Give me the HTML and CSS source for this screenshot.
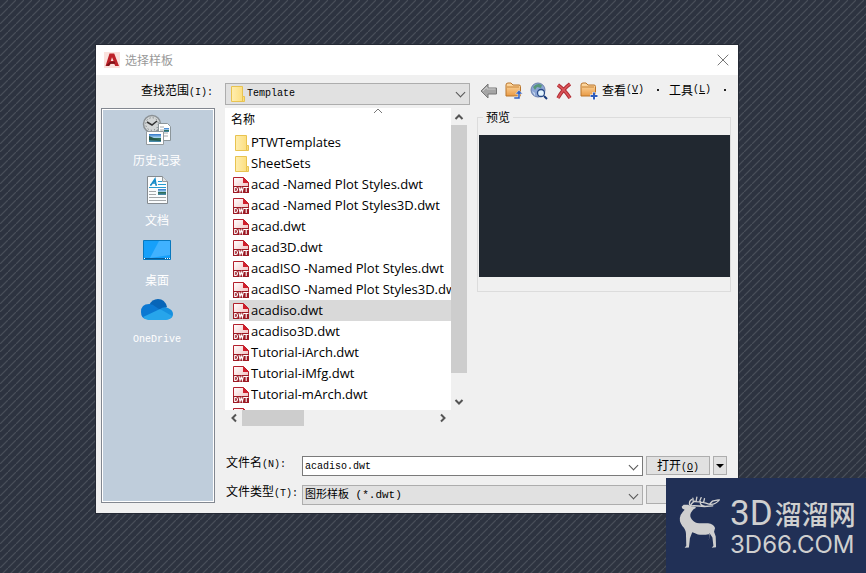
FILE: index.html
```html
<!DOCTYPE html>
<html lang="zh-CN">
<head>
<meta charset="utf-8">
<meta name="viewport" content="width=device-width, initial-scale=1">
<title>选择样板</title>
<link rel="stylesheet" href="styles.css">
</head>
<body>
<svg class="defs" aria-hidden="true">
  <defs>
    <linearGradient id="gRed" x1="0" y1="0" x2="1" y2="1"><stop offset="0" stop-color="#fff"/><stop offset="1" stop-color="#eeb4b4"/></linearGradient>
    <linearGradient id="gFolder" x1="0" y1="0" x2="1" y2="0"><stop offset="0" stop-color="#ffeeb0"/><stop offset="1" stop-color="#fbdc78"/></linearGradient>
    <linearGradient id="gOrange" x1="0" y1="0" x2="0" y2="1"><stop offset="0" stop-color="#ffe0ad"/><stop offset="1" stop-color="#e99a45"/></linearGradient>
    <linearGradient id="gPhoto" x1="0" y1="0" x2="0" y2="1"><stop offset="0" stop-color="#2f74c9"/><stop offset=".5" stop-color="#b5dff2"/><stop offset=".55" stop-color="#2d6b50"/><stop offset="1" stop-color="#4b8fb8"/></linearGradient>
  </defs>
  <symbol id="folder" viewBox="0 0 14 16"><path d="M.5.5h11v10h2v5H.5z" fill="url(#gFolder)" stroke="#e8c350"/><path d="M11.500 10.500v5" stroke="#e8c350"/></symbol>
  <symbol id="dwt" viewBox="0 0 16 16">
    <path d="M.5 15.500V.5h10l5 5v10z" fill="url(#gRed)" stroke="#b3202c"/>
    <path d="M10 0l6 6h-6z" fill="#d01f2c"/><path d="M0 9h16v7H0z" fill="#9c1a24"/>
    <path d="M1.700 10.500v4h1q1.800 0 1.800-2t-1.800-2zM6 10l1 4.500 1.200-3.500 1.200 3.500 1-4.500M11 10.500h4.500M13.200 10.500v4.500" fill="none" stroke="#fff" stroke-width="1.100"/>
  </symbol>
  <symbol id="orange-folder" viewBox="0 0 18 18"><path d="M1 14V3q0-2 2-2h3l2 2h6q1.500 0 1.500 1.500V14z" fill="url(#gOrange)" stroke="#b9742b"/><path d="M2 5h12" stroke="#c88438"/></symbol>
</svg>

<main class="dialog">
  <header class="titlebar">
    <svg class="app-icon" viewBox="0 0 16 16" aria-hidden="true"><path fill="#fae2de" d="M0 0h16v16H0z"/><path fill="#bd2229" d="M5.500 1.500h4.700L15 14h-3.800l-1-2.300H6.600L5 14H1.500zM8 5.200L6.800 9h2.700z"/><path fill="#7d1218" d="M2 13.500l4-3.800 4.500-.2.800 2.300H6.600L5 14z"/></svg>
    <h1>选择样板</h1>
    <button class="close" aria-label="关闭"><svg viewBox="0 0 12 12"><path d="M.7.7l10.600 10.600M11.300.7L.7 11.300" stroke="#777" fill="none"/></svg></button>
  </header>

  <div class="content">
    <div class="lookup">
      <label for="folder-select">查找范围<span class="mono">(I):</span></label>
      <div class="combo folder-combo">
        <svg class="folder-icon" aria-hidden="true"><use href="#folder"/></svg>
        <select id="folder-select"><option>Template</option></select>
      </div>
      <nav class="toolbar">
        <button aria-label="后退"><svg viewBox="0 0 18 18"><path d="M1 9l7-7v4h8.500v6H8v4z" fill="#a5a5a5" stroke="#777"/><path d="M3 9l4-4v2h8.500" fill="none" stroke="#ccc"/></svg></button>
        <button aria-label="上一级"><svg viewBox="0 0 18 18"><use href="#orange-folder"/><path d="M9 17h6v-5h2.500L14 8l-3.500 4H13v3H9z" fill="#3162c4" stroke="#eee" stroke-width=".5"/></svg></button>
        <button aria-label="搜索"><svg viewBox="0 0 18 18"><circle cx="8" cy="8" r="7" fill="#8aa4d4" stroke="#6c80ab"/><path d="M3 5q4-5 9-2l-1 3-4-1-2 3z" fill="#579779"/><path d="M2 9l3 2v3z" fill="#c4d5ec"/><circle cx="11" cy="11" r="3.500" fill="#e4f5ff" stroke="#294a86" stroke-width="1.300"/><path d="M14 14l3 3" stroke="#173a7b" stroke-width="2"/></svg></button>
        <button aria-label="删除"><svg viewBox="0 0 18 18"><path d="M3 3q7 5 12 13M15 2Q8 7 3 16" fill="none" stroke="#ac2931" stroke-width="3.600"/><path d="M3 3q7 5 12 13M15 2Q8 7 3 16" fill="none" stroke="#da5459" stroke-width="1.600"/></svg></button>
        <button aria-label="新建文件夹"><svg viewBox="0 0 18 18"><use href="#orange-folder"/><path d="M14 10v8M10 14h8" stroke="#fff" stroke-width="3"/><path d="M14 10.500v7M10.500 14h7" stroke="#2f5dbd" stroke-width="2"/></svg></button>
        <button class="menu">查看<span class="mono">(<u>V</u>)</span><i></i></button>
        <button class="menu">工具<span class="mono">(<u>L</u>)</span><i></i></button>
      </nav>
    </div>

    <aside class="places">
      <a href="#history"><svg viewBox="0 0 32 32"><circle cx="11" cy="10" r="8.500" fill="#d3d6d7" stroke="#8b9195" stroke-width="1.500"/><circle cx="11" cy="10" r="6.300" fill="none" stroke="#656d70" stroke-dasharray="1 2.300"/><path d="M6 8l5 3 5-4" fill="none" stroke="#333" stroke-width="1.500"/><path d="M17.500 9.500h9l3 3v14h-12z" fill="#fff" stroke="#8c969b"/><path d="M19 13h4M19 16h4M19 19h8M19 22h8" stroke="#a6aaac"/><path d="M23 14h5v4h-5z" fill="url(#gPhoto)"/><path d="M5.500 17.500h17v13h-17z" fill="#fff" stroke="#959b9e"/><path d="M8 20h12v8H8z" fill="url(#gPhoto)"/><path d="M8 22q6 3 12 4v1l-12-1z" fill="#28584b"/></svg><span>历史记录</span></a>
      <a href="#documents"><svg viewBox="0 0 32 32"><path d="M6.500 2.500h15l5 5v22h-20z" fill="#fafcfd" stroke="#858b90"/><path d="M21.500 2.500v5h5" fill="#e0e4e6" stroke="#92999d"/><path d="M9 11h1l4-6 1 6h1M11 9h4" fill="none" stroke="#168bc8" stroke-width="1.500"/><path d="M17 7.500h4M17 10.500h8M8 13.500h17" stroke="#269bd0"/><path d="M8 17.500h7M8 20.500h7M8 23.500h17M8 26.500h17" stroke="#a3a7aa"/><path d="M17 15h8v6h-8z" fill="url(#gPhoto)"/></svg><span>文档</span></a>
      <a href="#desktop"><svg viewBox="0 0 32 32"><path d="M2.500 6.500h27v19h-27z" fill="#16a0fa" stroke="#0878be"/><path d="M18 7h11v14L9 24z" fill="#40b2ff"/><path d="M3 24h26v1H3z" fill="#075c98"/><path d="M3 24h1v1H3zM24 24h1v1h-1zM26 24h1v1h-1zM28 24h1v1h-1z" fill="#fff"/></svg><span>桌面</span></a>
      <a href="#onedrive"><svg viewBox="0 0 32 32"><path d="M8 11Q11 5 17 5q7 0 9 8l-7 4z" fill="#0765b8"/><path d="M0 18q0-8 8-8 4 0 7 3l6 4-16 8Q0 24 0 18z" fill="#0b78d2"/><path d="M19 15q4-3 8-1 5 2 5 6 0 4-4 5z" fill="#1690df"/><path d="M2 23l17-8 12 7q-2 4-6 4H7q-3 0-5-3z" fill="#27a5eb"/></svg><span class="mono">OneDrive</span></a>
    </aside>

    <section class="browser">
      <div class="files">
        <div class="heading">名称<svg viewBox="0 0 10 6"><path d="M1 5l4-4 4 4" fill="none" stroke="#777"/></svg></div>
        <ul>
          <li><svg class="folder-icon"><use href="#folder"/></svg>PTWTemplates</li>
          <li><svg class="folder-icon"><use href="#folder"/></svg>SheetSets</li>
          <li><svg><use href="#dwt"/></svg>acad -Named Plot Styles.dwt</li>
          <li><svg><use href="#dwt"/></svg>acad -Named Plot Styles3D.dwt</li>
          <li><svg><use href="#dwt"/></svg>acad.dwt</li>
          <li><svg><use href="#dwt"/></svg>acad3D.dwt</li>
          <li><svg><use href="#dwt"/></svg>acadISO -Named Plot Styles.dwt</li>
          <li><svg><use href="#dwt"/></svg>acadISO -Named Plot Styles3D.dwt</li>
          <li class="selected"><svg><use href="#dwt"/></svg>acadiso.dwt</li>
          <li><svg><use href="#dwt"/></svg>acadiso3D.dwt</li>
          <li><svg><use href="#dwt"/></svg>Tutorial-iArch.dwt</li>
          <li><svg><use href="#dwt"/></svg>Tutorial-iMfg.dwt</li>
          <li><svg><use href="#dwt"/></svg>Tutorial-mArch.dwt</li>
          <li><svg><use href="#dwt"/></svg></li>
        </ul>
      </div>
      <div class="vscroll">
        <button aria-label="向上滚动"><svg viewBox="0 0 10 10"><path d="M1.500 7L5 3.500 8.500 7" fill="none" stroke="#555" stroke-width="2"/></svg></button>
        <div class="thumb"></div>
        <button aria-label="向下滚动"><svg viewBox="0 0 10 10"><path d="M1.500 3L5 6.500 8.500 3" fill="none" stroke="#555" stroke-width="2"/></svg></button>
      </div>
      <div class="hscroll">
        <button aria-label="向左滚动"><svg viewBox="0 0 10 10"><path d="M7 1.500L3.500 5 7 8.500" fill="none" stroke="#555" stroke-width="2"/></svg></button>
        <div class="thumb"></div>
        <button aria-label="向右滚动"><svg viewBox="0 0 10 10"><path d="M3 1.500L6.500 5 3 8.500" fill="none" stroke="#555" stroke-width="2"/></svg></button>
      </div>
    </section>

    <fieldset class="preview">
      <legend>预览</legend>
      <div class="canvas"></div>
    </fieldset>

    <form class="fields">
      <label for="file-name">文件名<span class="mono">(N):</span></label>
      <div class="combo editable"><input id="file-name" value="acadiso.dwt"></div>
      <button type="button" class="push">打开<span class="mono">(<u>O</u>)</span></button>
      <button type="button" class="push arrow" aria-label="打开选项"><svg viewBox="0 0 8 4"><path d="M0 0h8L4 4z"/></svg></button>
      <label for="file-type">文件类型<span class="mono">(T):</span></label>
      <div class="combo"><select id="file-type"><option>图形样板 (*.dwt)</option></select></div>
      <button type="button" class="push" aria-label="取消"></button>
    </form>
  </div>
</main>

<div class="brand">
  <svg viewBox="0 0 130 180" aria-hidden="true">
    <path fill="#cfcfcf" d="M8 26L14 20 27 20 38 25 46 25 52 29 43 34 36 44Q31 55 39 64Q47 75 61 76L88 76Q104 78 109 90L106 101 111 116 112 148 99 150 104 144 101 119 92 105 90 129 93 108Q75 112 57 110Q45 104 40 103L33 121 30 149 17 150 22 144 21 107Q21 95 10 84Q-2 68 5 51Q11 41 17 35L10 31z"/>
    <path fill="none" stroke="#cfcfcf" stroke-width="4" stroke-linecap="round" d="M34 26Q36 15 48 9M32 20Q30 8 38 4M43 11L42 0M52 8L54-3M63 8L67-2M75 10L77 1M35 23Q54 22 77 25L102 23M49 10Q74 10 90 18Q108 22 122 5M92 18L101 9 119 5M65 10Q61 20 79 25"/>
  </svg>
  <div class="wordmark"><strong>3D<span>溜溜网</span></strong><b>3D66.COM</b></div>
</div>
</body>
</html>
```
FILE: styles.css
```css
* { box-sizing: border-box; }
body {
  margin: 0;
  min-height: 100vh;
  padding: 45px 128px 60px 96px;
  background: #2d3340 linear-gradient(135deg, #2d3340 0 40%, #484e59 50%, #2d3340 60%) 0 0 / 8px 8px;
  color: #000;
  font: 12px/16px "Noto Sans CJK SC", sans-serif;
}
.defs { position: absolute; width: 0; height: 0; }
button { margin: 0; padding: 0; border: 0; background: none; color: inherit; font: inherit; }
svg { display: block; overflow: visible; flex: none; }
.mono { font-family: "Liberation Mono", monospace; font-size: 10px; }

.dialog { background: #f0f0f0; box-shadow: 0 0 0 1px #252a35; }
.titlebar { display: flex; align-items: center; gap: 5px; height: 30px; padding: 0 9px 0 8px; background: #fff; color: #999; }
.titlebar h1 { flex: 1; margin: 0; font-size: 12px; font-weight: 400; }
.app-icon { width: 16px; height: 16px; }
.close svg { width: 12px; height: 12px; }

.content {
  display: grid;
  grid-template-columns: 114px 242px minmax(0, 1fr);
  grid-template-rows: 33px 318px auto;
  column-gap: 10px;
  padding: 0 7px 8px 5px;
}
.lookup { grid-column: 1 / -1; display: flex; align-items: center; padding-top: 4px; }
.lookup > label { flex: none; width: 124px; padding: 0 12px 5px 0; text-align: right; }

.combo { position: relative; display: flex; align-items: center; height: 20px; border: 1px solid #adadad; background: #e1e1e1; }
.combo::after { content: ""; position: absolute; right: 5px; top: 5px; width: 6px; height: 6px; border: solid #555; border-width: 0 1px 1px 0; transform: rotate(45deg); pointer-events: none; }
.combo select, .combo input { flex: 1; min-width: 0; height: 100%; padding: 0 2px; border: 0; background: none; color: #000; appearance: none; outline: 0; font: 11px/16px "Liberation Mono", "Noto Sans CJK SC", monospace; }
.combo input, #folder-select { font-size: 10px; }
.editable { border-color: #7a7a7a; background: #fff; }
.folder-combo { flex: none; width: 245px; height: 22px; padding-left: 5px; }
.folder-icon { width: 14px; height: 16px; }

.toolbar { display: flex; align-items: center; gap: 7px; padding: 0 0 5px 10px; white-space: nowrap; }
.toolbar svg { width: 18px; height: 18px; }
.toolbar .menu { display: flex; align-items: center; margin-left: -3px; padding-bottom: 3px; }
.toolbar .menu i { width: 2px; height: 2px; margin: 0 6px 0 13px; background: #222; }

.places { grid-row: 2 / 4; display: flex; flex-direction: column; gap: 4px; height: 395px; padding: 5px 2px 0 0; border: 1px solid #828790; outline: 1px solid #fff; outline-offset: -2px; background: #bfcddb; }
.places a { display: flex; flex-direction: column; align-items: center; gap: 6px; height: 56px; color: #fff; text-decoration: none; }
.places svg { width: 32px; height: 32px; }

.browser { display: grid; grid-template-columns: minmax(0, 1fr) 16px; grid-template-rows: 302px 16px; }
.files { overflow: hidden; background: #fff; }
/* The name column is wider than the visible list; the sort mark is at its middle. */
.heading { display: grid; grid-template-columns: 1fr auto 1fr; align-items: start; width: 306px; height: 24px; padding: 3px 6px 0; }
.heading svg { width: 10px; height: 6px; margin-top: -3px; }
.files ul { margin: 0; padding: 0 0 0 4px; list-style: none; font: 13px/21px "Open Sans", sans-serif; }
.files li { display: flex; align-items: center; gap: 2px; height: 21px; padding-left: 4px; white-space: nowrap; }
.files li svg { width: 16px; height: 16px; }
.files li .folder-icon { width: 14px; margin: 0 0 0 2px; }
.files .selected { background: #d9d9d9; }
.vscroll, .hscroll { display: flex; align-items: center; justify-content: space-between; }
.vscroll { flex-direction: column; }
.vscroll button, .hscroll button { display: grid; place-items: center; width: 17px; height: 17px; }
.vscroll svg, .hscroll svg { width: 10px; height: 10px; }
.vscroll .thumb { width: 100%; height: 248px; margin-bottom: auto; background: #cdcdcd; }
.hscroll .thumb { width: 62px; height: 16px; margin-right: auto; background: #cdcdcd; }

.preview { align-self: start; min-width: 0; margin: 1px 0 0; padding: 10px 0 14px 1px; border: 1px solid #dcdcdc; }
.preview legend { margin-left: 4px; padding: 0 3px; }
.canvas { height: 142px; background: #212830; }

.fields { grid-column: 2 / 4; display: grid; grid-template-columns: 73px minmax(0, 341px) 64px 14px; grid-auto-rows: 20px; gap: 9px 3px; padding: 30px 0 0 1px; }
.fields label { margin-top: -2px; white-space: nowrap; }
.push { height: 19px; border: 1px solid #adadad; background: #e1e1e1; }
.arrow { display: grid; place-items: center; }
.arrow svg { width: 8px; height: 4px; }

.brand { position: fixed; right: 0; bottom: 0; display: flex; width: 200px; height: 95px; background: #213056; color: #cfcfcf; }
.brand svg { width: 43px; height: 60px; margin: 20px 0 0 13px; }
.wordmark { display: flex; flex-direction: column; margin: 18px 0 0 8px; white-space: nowrap; }
.wordmark strong { display: flex; gap: 2px; font: 400 35px/36px Roboto, sans-serif; }
.wordmark span { font: 500 27px/36px "Noto Sans CJK SC", sans-serif; }
.wordmark b { font: 400 24px/26px Inter, sans-serif; }
```
